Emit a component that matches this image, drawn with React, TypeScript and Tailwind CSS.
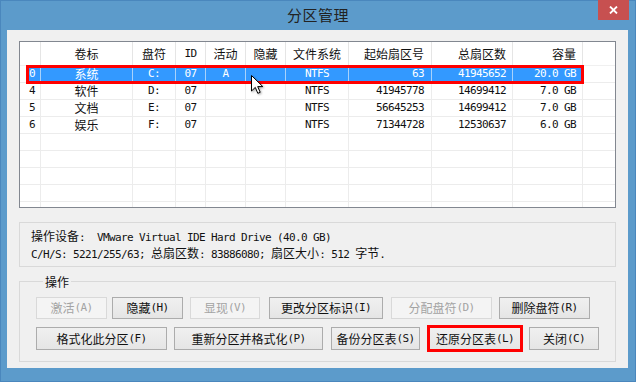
import React from "react";

const CJK = /[\u3000-\u9fff\uff00-\uffef]/;

function T({ s }: { s: string }) {
  const parts: { t: string; c: boolean }[] = [];
  for (const ch of s) {
    const c = CJK.test(ch);
    const last = parts[parts.length - 1];
    if (last && last.c === c) last.t += ch;
    else parts.push({ t: ch, c });
  }
  return (
    <>
      {parts.map((p, i) =>
        p.c ? (
          <span key={i} className="font-['Noto_Sans_CJK_SC',sans-serif] text-[12px] tracking-normal">
            {p.t}
          </span>
        ) : (
          <span key={i} className="font-['DejaVu_Sans_Mono',monospace] text-[11px] tracking-[-0.62px]">
            {p.t}
          </span>
        )
      )}
    </>
  );
}

type Col = { w: string; h: string; a: string };

const cols: Col[] = [
  { w: "w-[21px]", h: "", a: "justify-start pl-[9px]" },
  { w: "w-[92px]", h: "卷标", a: "justify-center" },
  { w: "w-[43px]", h: "盘符", a: "justify-center" },
  { w: "w-[30px]", h: "ID", a: "justify-center" },
  { w: "w-[40px]", h: "活动", a: "justify-center" },
  { w: "w-[40px]", h: "隐藏", a: "justify-center" },
  { w: "w-[63px]", h: "文件系统", a: "justify-center" },
  { w: "w-[83px]", h: "起始扇区号", a: "justify-end pr-[7px]" },
  { w: "w-[81px]", h: "总扇区数", a: "justify-end pr-[6px]" },
  { w: "w-[70px]", h: "容量", a: "justify-end pr-[6px]" },
];

const rows: string[][] = [
  ["0", "系统", "C:", "07", "A", "", "NTFS", "63", "41945652", "20.0 GB"],
  ["4", "软件", "D:", "07", "", "", "NTFS", "41945778", "14699412", "7.0 GB"],
  ["5", "文档", "E:", "07", "", "", "NTFS", "56645253", "14699412", "7.0 GB"],
  ["6", "娱乐", "F:", "07", "", "", "NTFS", "71344728", "12530637", "6.0 GB"],
  ["", "", "", "", "", "", "", "", "", ""],
  ["", "", "", "", "", "", "", "", "", ""],
  ["", "", "", "", "", "", "", "", "", ""],
  ["", "", "", "", "", "", "", "", "", ""],
  ["", "", "", "", "", "", "", "", "", ""],
];

function Btn({
  label,
  w,
  disabled,
  h,
  className,
  marked,
}: {
  label: string;
  w: string;
  h: string;
  disabled?: boolean;
  className?: string;
  marked?: boolean;
}) {
  const base = disabled
    ? "border-[#d9d9d9] bg-[#f4f4f4] text-[#a3a3a3]"
    : "border-[#acacac] bg-[linear-gradient(#f0f0f0,#e5e5e5)] text-[#111]";
  return (
    <div
      className={`relative flex shrink-0 items-center justify-center whitespace-pre border leading-[14px] ${base} ${w} ${h} ${className ?? ""}`}
    >
      <T s={label} />
      {marked && <span className="pointer-events-none absolute -inset-[3px] border-[3px] border-[#ff0000]" />}
    </div>
  );
}

function Cursor() {
  return (
    <svg width="14" height="21" viewBox="0 0 14 21" className="drop-shadow-[1px_1px_1px_rgba(0,0,0,0.35)]">
      <path
        d="M0.5 0.5 L0.5 16 L4.3 12.4 L6.8 18.3 L9.2 17.3 L6.7 11.6 L11.8 11.6 Z"
        fill="#fff"
        stroke="#000"
        strokeWidth="1"
        strokeLinejoin="round"
      />
    </svg>
  );
}

export default function App() {
  return (
    <div className="relative flex h-[382px] w-[636px] flex-col overflow-hidden bg-[#5c9bcb] shadow-[inset_0_0_0_1px_#4a87bd]">
      {/* title bar */}
      <div className="relative flex h-[30px] shrink-0 items-center justify-center">
        <span className="font-['Noto_Sans_CJK_SC',sans-serif] text-[15px] leading-[20px] tracking-[0.5px] text-[#222]">
          分区管理
        </span>
        <div className="absolute right-[7px] top-0 flex h-[20px] w-[31px] items-center justify-center bg-[#c75050]">
          <svg width="9" height="8" viewBox="0 0 9 8">
            <path d="M1 0.5 L8 7.5 M8 0.5 L1 7.5" stroke="#fff" strokeWidth="1.8" />
          </svg>
        </div>
      </div>

      {/* client */}
      <div className="ml-[7px] flex h-[338px] w-[621px] flex-col bg-[#f0f0f0] px-[12px] pt-[11px]">
        {/* list view */}
        <div className="relative h-[167px] w-[597px] shrink-0 border border-[#828790] bg-white">
          <div className="flex h-full flex-col overflow-hidden">
            <div className="flex h-[24px] shrink-0 border-b border-[#f0f0f0]">
              {cols.map((c, i) => (
                <div
                  key={i}
                  className={`flex h-full shrink-0 items-center whitespace-pre border-r border-[#e5e5e5] leading-[14px] text-[#111] ${c.w} ${c.a}`}
                >
                  <T s={c.h} />
                </div>
              ))}
              <div className="flex-1" />
            </div>
            {rows.map((r, ri) => {
              const sel = ri === 0;
              return (
                <div key={ri} className="flex h-[17px] shrink-0 border-b border-[#ececec]">
                  {cols.map((c, i) => (
                    <div
                      key={i}
                      className={`flex h-full shrink-0 items-center whitespace-pre border-r leading-[14px] ${c.w} ${c.a} ${
                        sel
                          ? i === 0
                            ? "border-[#a9d2fb] bg-[linear-gradient(90deg,#ffffff_6px,#3399ff_6px)] text-white"
                            : "border-[#a9d2fb] bg-[#3399ff] text-white"
                          : "border-[#ececec] text-[#111]"
                      }`}
                    >
                      <T s={r[i]} />
                    </div>
                  ))}
                  <div className="flex-1" />
                </div>
              );
            })}
          </div>
          <div className="pointer-events-none absolute left-[6px] top-[23px] h-[19px] w-[558px] border-[3px] border-[#ff0000]" />
          <div className="pointer-events-none absolute left-[231px] top-[33px]">
            <Cursor />
          </div>
        </div>

        {/* device info */}
        <div className="mt-[14px] flex h-[45px] w-[597px] shrink-0 flex-col justify-center border border-[#d9d9d9] pl-[11px] text-[#111]">
          <div className="whitespace-pre leading-[14px]">
            <T s="操作设备:  VMware Virtual IDE Hard Drive (40.0 GB)" />
          </div>
          <div className="whitespace-pre leading-[14px]">
            <T s="C/H/S: 5221/255/63; 总扇区数: 83886080; 扇区大小: 512 字节." />
          </div>
        </div>

        {/* operations group */}
        <fieldset className="mt-[7px] h-[88px] w-[597px] shrink-0 border border-[#d9d9d9] pb-[12px] pl-[16px] pt-[8px]">
          <legend className="ml-[7px] px-[2px] leading-[14px] text-[#111]">
            <T s="操作" />
          </legend>
          <div className="flex">
            <Btn label="激活(A)" w="w-[71px]" h="h-[22px]" disabled />
            <Btn label="隐藏(H)" w="w-[71px]" h="h-[22px]" className="ml-[5px]" />
            <Btn label="显现(V)" w="w-[70px]" h="h-[22px]" className="ml-[7px]" disabled />
            <Btn label="更改分区标识(I)" w="w-[114px]" h="h-[22px]" className="ml-[9px]" />
            <Btn label="分配盘符(D)" w="w-[101px]" h="h-[22px]" className="ml-[8px]" disabled />
            <Btn label="删除盘符(R)" w="w-[91px]" h="h-[22px]" className="ml-[7px]" />
          </div>
          <div className="mt-[8px] flex">
            <Btn label="格式化此分区(F)" w="w-[131px]" h="h-[23px]" />
            <Btn label="重新分区并格式化(P)" w="w-[149px]" h="h-[23px]" className="ml-[7px]" />
            <Btn label="备份分区表(S)" w="w-[89px]" h="h-[23px]" className="ml-[8px]" />
            <Btn label="还原分区表(L)" w="w-[92px]" h="h-[23px]" className="ml-[9px]" marked />
            <Btn label="关闭(C)" w="w-[70px]" h="h-[23px]" className="ml-[8px]" />
          </div>
        </fieldset>
      </div>
    </div>
  );
}
